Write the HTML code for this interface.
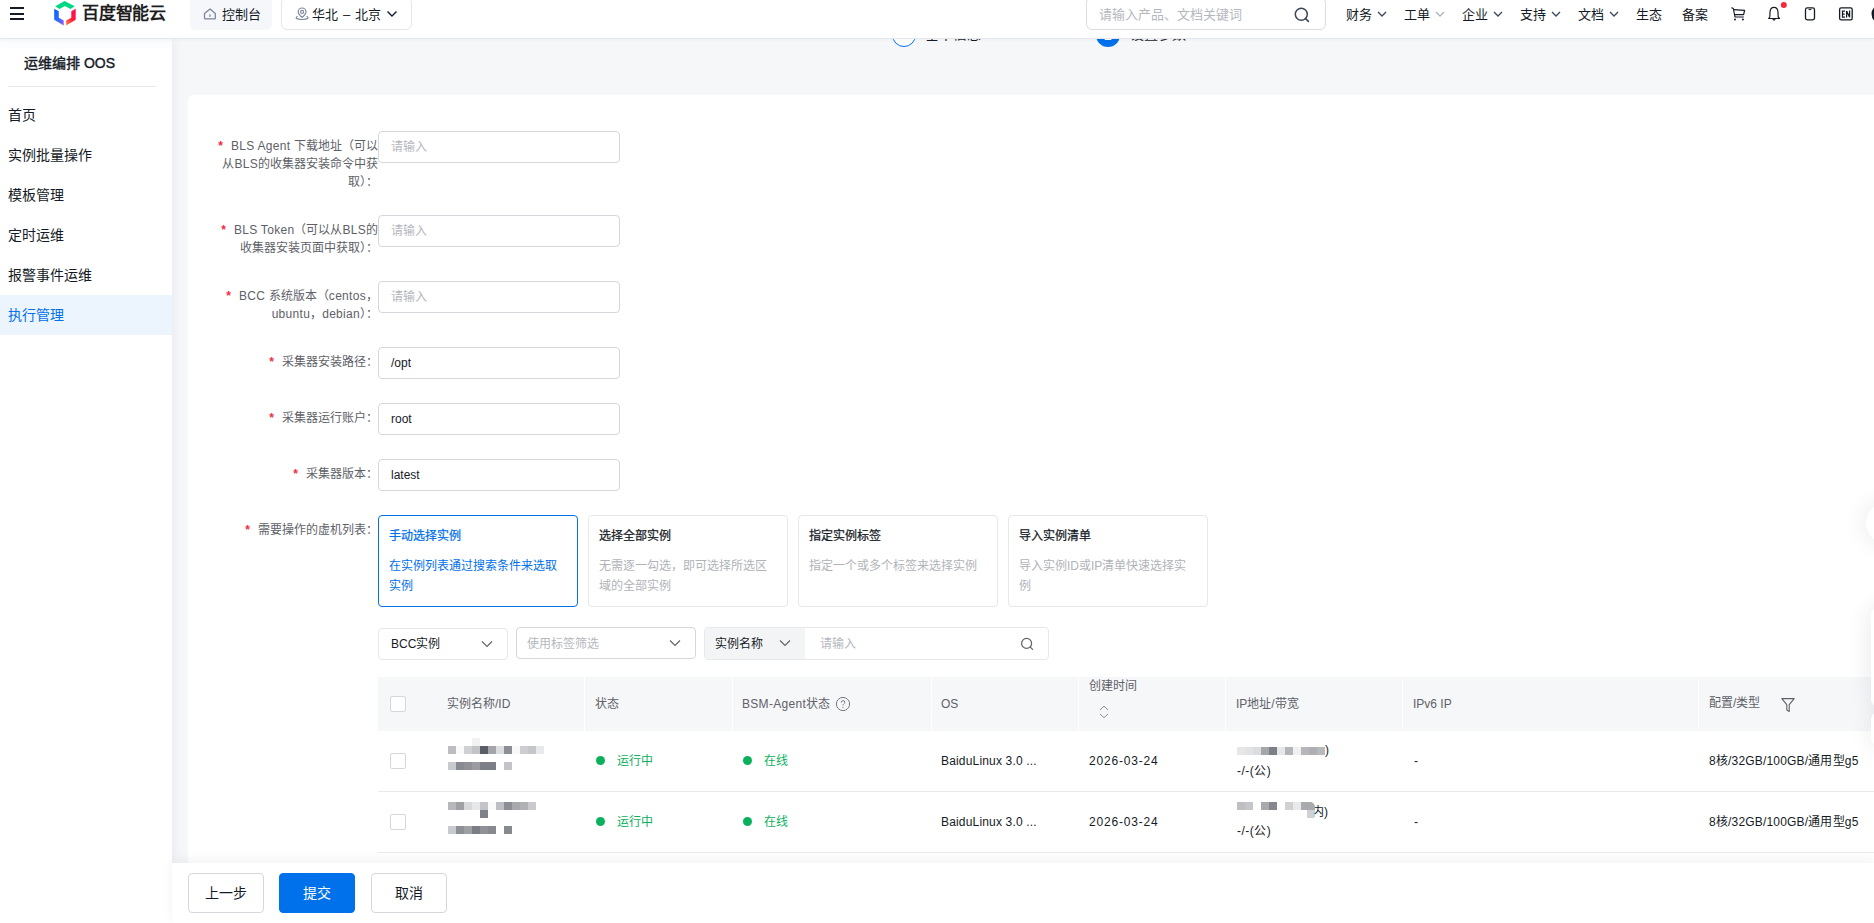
<!DOCTYPE html>
<html lang="zh-CN">
<head>
<meta charset="utf-8">
<title>运维编排 OOS</title>
<style>
*{box-sizing:border-box;margin:0;padding:0}
html,body{width:1874px;height:923px;overflow:hidden}
body{position:relative;background:#f6f7f9;font-family:"Liberation Sans",sans-serif;color:#151b26;font-size:12px}
.a{position:absolute;white-space:nowrap}
/* header */
#hdr{position:absolute;left:0;top:0;width:1874px;height:39px;background:#fff;border-bottom:1px solid #e3e6eb;z-index:10;box-shadow:0 1px 4px rgba(30,40,60,.03)}
.nav{font-size:13px;line-height:18px;top:6px;color:#151b26}
/* sidebar */
#side{position:absolute;left:0;top:39px;width:172px;height:884px;background:#fff;z-index:5;box-shadow:2px 0 10px rgba(30,40,60,.06)}
.mi{position:absolute;left:0;width:172px;height:40px;line-height:40px;padding-left:8px;font-size:14px;color:#151b26}
.mi.on{background:#ecf4fe;color:#0070eb}
/* card */
#card{position:absolute;left:188px;top:95px;width:1700px;height:800px;background:#fff;border-radius:6px}
.lbl{position:absolute;margin-top:1px;right:1496px;font-size:12px;line-height:18px;color:#5e6168;text-align:right;white-space:nowrap}
.star{color:#f5293e;margin-right:8px;font-size:12px;font-weight:700;position:relative;top:0}
.inp{position:absolute;left:378px;width:242px;height:32px;border:1px solid #d4d7dc;border-radius:4px;background:#fff;font-size:12px;line-height:30px;padding-left:12px;color:#151b26}
.ph{color:#b4b7bd}
.ls{letter-spacing:0.3px}
.rc{position:absolute;top:515px;width:200px;height:92px;border:1px solid #e6e8eb;border-radius:4px;background:#fff;padding:10px 0 0 10px}
.rc .t{font-size:12px;line-height:20px;font-weight:400;-webkit-text-stroke:0.25px currentColor;color:#151b26}
.rc .d{font-size:12px;line-height:20px;color:#b0b3b8;margin-top:10px;width:170px;white-space:normal}
.rc.on{border-color:#0070eb}
.rc.on .t,.rc.on .d{color:#0070eb}
/* table */
.th{position:absolute;top:677px;height:54px;background:#f6f7f9}
.tht{position:absolute;font-size:12px;line-height:18px;color:#5e6168;white-space:nowrap}
.td{position:absolute;font-size:12px;line-height:18px;color:#151b26;white-space:nowrap}
.cb{position:absolute;width:16px;height:16px;border:1px solid #d4d7dc;border-radius:2px;background:#fff}
.dot{position:absolute;width:9px;height:9px;border-radius:50%;background:#0ab15d}
.grn{color:#0ab15d}
.px{position:absolute;width:8px;height:8px}
/* footer */
#foot{position:absolute;left:172px;top:863px;width:1702px;height:60px;background:#fff;z-index:6;box-shadow:0 -3px 10px rgba(30,40,60,.06)}
.btn{position:absolute;top:10px;width:76px;height:40px;border:1px solid #d4d7dc;border-radius:4px;background:#fff;font-size:14px;line-height:38px;text-align:center;color:#151b26}
.btn.p{background:#0070eb;border-color:#0070eb;color:#fff}
</style>
</head>
<body>

<!-- steps (partially hidden under header) -->
<div class="a" style="left:892px;top:23px;width:24px;height:24px;border:1.5px solid #0070eb;border-radius:50%;background:#fff;color:#0070eb;font-size:14px;line-height:21px;text-align:center">1</div>
<div class="a" style="left:925px;top:25px;font-size:14px;line-height:18px;color:#151b26">基本信息</div>
<div class="a" style="left:1096px;top:23px;width:24px;height:24px;border-radius:50%;background:#0070eb;color:#fff;font-size:14px;line-height:24px;text-align:center">2</div>
<div class="a" style="left:1130px;top:25px;font-size:14px;line-height:18px;color:#151b26">设置参数</div>

<div id="hdr">
  <!-- hamburger -->
  <div class="a" style="left:10px;top:7px;width:14px;height:2px;background:#151b26"></div>
  <div class="a" style="left:10px;top:12.5px;width:14px;height:2px;background:#151b26"></div>
  <div class="a" style="left:10px;top:18px;width:14px;height:2px;background:#151b26"></div>
  <!-- logo -->
  <svg class="a" style="left:0;top:0" width="80" height="30" viewBox="0 0 80 30">
    <defs>
      <linearGradient id="gb" x1="0" y1="0" x2="1" y2="1"><stop offset="0" stop-color="#0a5cff"/><stop offset=".55" stop-color="#2f6dfb"/><stop offset="1" stop-color="#a457f4"/></linearGradient>
      <linearGradient id="gr" x1="1" y1="0" x2="0" y2="1"><stop offset="0" stop-color="#ff0a5a"/><stop offset=".5" stop-color="#ff1a3c"/><stop offset="1" stop-color="#ff8a4a"/></linearGradient>
    </defs>
    <polygon points="55.2,6.3 64.6,1.1 74.7,6.3 70.5,8.9 65,6 59.4,8.9" fill="#00d884"/>
    <polygon points="54.2,8.8 58.8,11.3 58.8,17.7 63.7,20.6 63.7,25.4 54.2,19.8" fill="url(#gb)"/>
    <polygon points="75.7,8.7 75.7,19.8 66.1,25.6 66.1,20.5 71.3,17.7 71.3,11.2" fill="url(#gr)"/>
  </svg>
  <div class="a" style="left:82px;top:2px;font-size:17px;line-height:24px;font-weight:700;color:#1e1e1e;letter-spacing:-0.2px">百度智能云</div>
  <!-- console btn -->
  <div class="a" style="left:190px;top:-3px;width:82px;height:33px;background:#f5f7fa;border-radius:6px"></div>
  <svg class="a" style="left:200px;top:2px" width="20" height="22" viewBox="200 2 20 22">
    <path d="M204.5,13.4 L210.1,8.9 L215.3,13.4 L215.3,18.2 Q215.3,18.9 214.6,18.9 L205.2,18.9 Q204.5,18.9 204.5,18.2 Z" fill="none" stroke="#7c879a" stroke-width="1.3" stroke-linejoin="round"/>
    <rect x="209.3" y="14.3" width="1.4" height="2.6" fill="#8c96a8"/>
  </svg>
  <div class="a nav" style="left:222px">控制台</div>
  <!-- region -->
  <div class="a" style="left:281px;top:-3px;width:131px;height:33px;border:1px solid #e3e6eb;border-radius:6px;background:#fff"></div>
  <svg class="a" style="left:290px;top:2px" width="24" height="22" viewBox="290 2 24 22">
    <path d="M302.1,17.3 C299.9,15.4 298.2,13.9 298.2,11.9 A3.9,3.9 0 0 1 306,11.9 C306,13.9 304.3,15.4 302.1,17.3 Z" fill="none" stroke="#7c879a" stroke-width="1.2"/>
    <circle cx="302.1" cy="11.9" r="1.5" fill="none" stroke="#7c879a" stroke-width="1.1"/>
    <path d="M297.2,16.6 Q295.6,17.6 296.6,18.6 Q298,19.5 302.1,19.5 Q306.2,19.5 307.6,18.6 Q308.6,17.6 307,16.6" fill="none" stroke="#7c879a" stroke-width="1.2" stroke-linecap="round"/>
  </svg>
  <div class="a nav" style="left:312px">华北<span style="margin:0 5px 0 5px">–</span>北京</div>
  <svg class="a" style="left:386px;top:9px" width="12" height="10" viewBox="0 0 12 10"><path d="M1.5,2.5 L6,7 L10.5,2.5" fill="none" stroke="#151b26" stroke-width="1.4"/></svg>
  <!-- search -->
  <div class="a" style="left:1086px;top:-3px;width:240px;height:33px;border:1px solid #d9dce1;border-radius:6px;background:#fff"></div>
  <div class="a nav" style="left:1099px;color:#b4b7bd">请输入产品、文档关键词</div>
  <svg class="a" style="left:1292px;top:5px" width="20" height="20" viewBox="0 0 20 20"><circle cx="9.3" cy="9.3" r="6" fill="none" stroke="#3d4759" stroke-width="1.5"/><path d="M13.6,13.6 L16.4,16.4" stroke="#3d4759" stroke-width="1.6" stroke-linecap="round"/></svg>
  <!-- nav -->
  <div class="a nav" style="left:1346px">财务</div>
  <svg class="a" style="left:1376px;top:9px" width="12" height="10" viewBox="0 0 12 10"><path d="M2,3 L6,7 L10,3" fill="none" stroke="#3d4759" stroke-width="1.3"/></svg>
  <div class="a nav" style="left:1404px">工单</div>
  <svg class="a" style="left:1434px;top:9px" width="12" height="10" viewBox="0 0 12 10"><path d="M2,3 L6,7 L10,3" fill="none" stroke="#a9b3c4" stroke-width="1.3"/></svg>
  <div class="a nav" style="left:1462px">企业</div>
  <svg class="a" style="left:1492px;top:9px" width="12" height="10" viewBox="0 0 12 10"><path d="M2,3 L6,7 L10,3" fill="none" stroke="#3d4759" stroke-width="1.3"/></svg>
  <div class="a nav" style="left:1520px">支持</div>
  <svg class="a" style="left:1550px;top:9px" width="12" height="10" viewBox="0 0 12 10"><path d="M2,3 L6,7 L10,3" fill="none" stroke="#3d4759" stroke-width="1.3"/></svg>
  <div class="a nav" style="left:1578px">文档</div>
  <svg class="a" style="left:1608px;top:9px" width="12" height="10" viewBox="0 0 12 10"><path d="M2,3 L6,7 L10,3" fill="none" stroke="#3d4759" stroke-width="1.3"/></svg>
  <div class="a nav" style="left:1636px">生态</div>
  <div class="a nav" style="left:1682px">备案</div>
  <!-- icons -->
  <svg class="a" style="left:1725px;top:0" width="149" height="30" viewBox="1725 0 149 30">
    <path d="M1731.5,7.6 L1733.3,8.5 L1735,17 L1743.8,17" fill="none" stroke="#151b26" stroke-width="1.2" stroke-linejoin="round"/>
    <path d="M1733.7,9.6 L1744.6,10.3 L1743.6,14.6 L1735,14.6" fill="none" stroke="#151b26" stroke-width="1.2" stroke-linejoin="round"/>
    <circle cx="1735" cy="19.5" r="1" fill="#151b26"/><circle cx="1742.9" cy="19.5" r="1" fill="#151b26"/>
    <path d="M1768.6,18.5 L1769.8,17 L1770,12 Q1770.4,7.3 1774,7.3 Q1777.6,7.3 1778,12 L1778.2,17 L1779.5,18.5 Z" fill="none" stroke="#151b26" stroke-width="1.2" stroke-linejoin="round"/>
    <path d="M1772.8,19 Q1774,21.2 1775.2,19" fill="none" stroke="#151b26" stroke-width="1.1"/>
    <circle cx="1783.8" cy="4.9" r="3" fill="#f5293e"/>
    <rect x="1805.5" y="7.9" width="9" height="12" rx="1.8" fill="none" stroke="#151b26" stroke-width="1.3"/>
    <path d="M1808.6,9.6 L1811.4,9.6" stroke="#151b26" stroke-width="1"/>
    <rect x="1839.6" y="7.9" width="12.6" height="12" rx="1.6" fill="none" stroke="#151b26" stroke-width="1.3"/>
    <path d="M1845,11.2 L1842.5,11.2 L1842.5,17.2 L1845,17.2 M1842.5,14.2 L1844.7,14.2 M1846.6,17.6 L1846.6,10.9 L1849.6,17.3 L1849.6,10.6" fill="none" stroke="#151b26" stroke-width="1.25"/>
    <circle cx="1881.3" cy="14" r="9.8" fill="#151b26"/>
  </svg>
</div>

<div id="side">
  <div class="a" style="left:0;top:0;width:172px;height:12px;background:linear-gradient(#f9fafc,#fff)"></div>
  <div class="a" style="left:24px;top:15px;font-size:14px;line-height:18px;font-weight:400;-webkit-text-stroke:0.4px #151b26;color:#151b26">运维编排 OOS</div>
  <div class="a" style="left:8px;top:47px;width:148px;height:1px;background:#e6e8eb"></div>
  <div class="mi" style="top:56px">首页</div>
  <div class="mi" style="top:96px">实例批量操作</div>
  <div class="mi" style="top:136px">模板管理</div>
  <div class="mi" style="top:176px">定时运维</div>
  <div class="mi" style="top:216px">报警事件运维</div>
  <div class="mi on" style="top:256px">执行管理</div>
</div>

<div id="card"></div>

<!-- form labels (absolute, page coords) -->
<div class="lbl" style="top:136px"><span class="star">*</span><span class="ls">BLS Agent </span>下载地址（可以<br>从<span class="ls">BLS</span>的收集器安装命令中获<br>取）：</div>
<div class="inp" style="top:131px"><span class="ph">请输入</span></div>

<div class="lbl" style="top:220px"><span class="star">*</span><span class="ls">BLS Token</span>（可以从<span class="ls">BLS</span>的<br>收集器安装页面中获取）：</div>
<div class="inp" style="top:215px"><span class="ph">请输入</span></div>

<div class="lbl" style="top:286px"><span class="star">*</span><span class="ls">BCC </span>系统版本（<span class="ls">centos</span>，<br><span class="ls">ubuntu</span>，<span class="ls">debian</span>）：</div>
<div class="inp" style="top:281px"><span class="ph">请输入</span></div>

<div class="lbl" style="top:352px"><span class="star">*</span>采集器安装路径：</div>
<div class="inp" style="top:347px">/opt</div>

<div class="lbl" style="top:408px"><span class="star">*</span>采集器运行账户：</div>
<div class="inp" style="top:403px">root</div>

<div class="lbl" style="top:464px"><span class="star">*</span>采集器版本：</div>
<div class="inp" style="top:459px">latest</div>

<div class="lbl" style="top:520px"><span class="star">*</span>需要操作的虚机列表：</div>

<div class="rc on" style="left:378px"><div class="t">手动选择实例</div><div class="d">在实例列表通过搜索条件来选取实例</div></div>
<div class="rc" style="left:588px"><div class="t">选择全部实例</div><div class="d">无需逐一勾选，即可选择所选区域的全部实例</div></div>
<div class="rc" style="left:798px"><div class="t">指定实例标签</div><div class="d">指定一个或多个标签来选择实例</div></div>
<div class="rc" style="left:1008px"><div class="t">导入实例清单</div><div class="d">导入实例ID或IP清单快速选择实例</div></div>

<!-- filters -->
<div class="a" style="left:378px;top:628px;width:130px;height:32px;border:1px solid #e6e8eb;border-radius:4px;background:#fff"></div>
<div class="a" style="left:391px;top:635px;font-size:12px;line-height:18px;color:#151b26">BCC实例</div>
<svg class="a" style="left:480px;top:638px" width="14" height="12" viewBox="0 0 14 12"><path d="M2,3.5 L7,8.5 L12,3.5" fill="none" stroke="#5e6168" stroke-width="1.1"/></svg>

<div class="a" style="left:516px;top:627px;width:180px;height:32px;border:1px solid #d4d7dc;border-radius:4px;background:#fff"></div>
<div class="a" style="left:527px;top:635px;font-size:12px;line-height:18px;color:#b4b7bd">使用标签筛选</div>
<svg class="a" style="left:668px;top:637px" width="14" height="12" viewBox="0 0 14 12"><path d="M2,3.5 L7,8.5 L12,3.5" fill="none" stroke="#5e6168" stroke-width="1.1"/></svg>

<div class="a" style="left:704px;top:627px;width:345px;height:33px;border:1px solid #e6e8eb;border-radius:4px;background:#fff;overflow:hidden"><div class="a" style="left:0;top:0;width:100px;height:33px;background:#f3f4f6"></div></div>
<div class="a" style="left:715px;top:635px;font-size:12px;line-height:18px;color:#151b26">实例名称</div>
<svg class="a" style="left:778px;top:637px" width="14" height="12" viewBox="0 0 14 12"><path d="M2,3.5 L7,8.5 L12,3.5" fill="none" stroke="#5e6168" stroke-width="1.1"/></svg>
<div class="a" style="left:820px;top:635px;font-size:12px;line-height:18px;color:#b4b7bd">请输入</div>
<svg class="a" style="left:1019px;top:636px" width="16" height="16" viewBox="0 0 16 16"><circle cx="7.6" cy="7.4" r="5" fill="none" stroke="#5e6168" stroke-width="1.2"/><path d="M11.3,11.1 L13.6,13.4" stroke="#5e6168" stroke-width="1.2" stroke-linecap="round"/></svg>

<!-- table header -->
<div class="th" style="left:378px;width:206px"></div>
<div class="th" style="left:585px;width:147px"></div>
<div class="th" style="left:733px;width:198px"></div>
<div class="th" style="left:932px;width:146px"></div>
<div class="th" style="left:1079px;width:146px"></div>
<div class="th" style="left:1226px;width:176px"></div>
<div class="th" style="left:1403px;width:295px"></div>
<div class="th" style="left:1699px;width:175px"></div>

<div class="cb" style="left:390px;top:696px"></div>
<div class="tht" style="left:447px;top:695px">实例名称/ID</div>
<div class="tht" style="left:595px;top:695px">状态</div>
<div class="tht" style="left:742px;top:695px;letter-spacing:0.3px">BSM-Agent状态</div>
<svg class="a" style="left:835px;top:696px" width="16" height="16" viewBox="0 0 16 16"><circle cx="8" cy="8" r="6.6" fill="none" stroke="#6e727a" stroke-width="0.95"/><path d="M6.2,6.5 Q6.2,4.6 8,4.6 Q9.8,4.6 9.8,6.3 Q9.8,7.2 8.8,7.8 Q8,8.3 8,9.4" fill="none" stroke="#6e727a" stroke-width="0.95"/><circle cx="8" cy="11.3" r=".6" fill="#6e727a"/></svg>
<div class="tht" style="left:941px;top:695px">OS</div>
<div class="tht" style="left:1089px;top:677px">创建时间</div>
<svg class="a" style="left:1097px;top:703px" width="14" height="18" viewBox="0 0 14 18"><path d="M3,6.8 L7,3.1 L11,6.8 M3,11 L7,14.7 L11,11" fill="none" stroke="#7d8189" stroke-width="0.9"/></svg>
<div class="tht" style="left:1236px;top:695px">IP地址/带宽</div>
<div class="tht" style="left:1413px;top:695px">IPv6 IP</div>
<div class="tht" style="left:1709px;top:694px">配置/类型</div>
<svg class="a" style="left:1779px;top:696px" width="18" height="18" viewBox="0 0 18 18"><path d="M2.8,2.6 L15.2,2.6 L10.2,8.6 L10.2,15.4 L7.8,14 L7.8,8.6 Z" fill="none" stroke="#5e6168" stroke-width="1.1" stroke-linejoin="round"/></svg>

<!-- rows -->
<div class="a" style="left:378px;top:791px;width:1496px;height:1px;background:#e8eaed"></div>
<div class="a" style="left:378px;top:852px;width:1496px;height:1px;background:#e8eaed"></div>

<div class="cb" style="left:390px;top:753px"></div>
<div class="cb" style="left:390px;top:814px"></div>

<div class="px" style="left:472px;top:738px;background:#f2f2f2"></div>
<div class="px" style="left:448px;top:746px;background:#bdbec2"></div>
<div class="px" style="left:456px;top:746px;background:#fafafa"></div>
<div class="px" style="left:464px;top:746px;background:#cfd0d2"></div>
<div class="px" style="left:472px;top:746px;background:#c2c3c6"></div>
<div class="px" style="left:480px;top:746px;background:#5a5e66"></div>
<div class="px" style="left:488px;top:746px;background:#a4a5a9"></div>
<div class="px" style="left:496px;top:746px;background:#dcdddf"></div>
<div class="px" style="left:504px;top:746px;background:#8b8e94"></div>
<div class="px" style="left:512px;top:746px;background:#f8f8f8"></div>
<div class="px" style="left:520px;top:746px;background:#cdced1"></div>
<div class="px" style="left:528px;top:746px;background:#c5c6c9"></div>
<div class="px" style="left:536px;top:746px;background:#e8e9ea"></div>
<div class="px" style="left:448px;top:762px;background:#c9cacd"></div>
<div class="px" style="left:456px;top:762px;background:#878a90"></div>
<div class="px" style="left:464px;top:762px;background:#8f9196"></div>
<div class="px" style="left:472px;top:762px;background:#9a9ca0"></div>
<div class="px" style="left:480px;top:762px;background:#7c7f86"></div>
<div class="px" style="left:488px;top:762px;background:#7c7f86"></div>
<div class="px" style="left:504px;top:762px;background:#c4c5c8"></div>
<div class="px" style="left:448px;top:802px;background:#b7b8bc"></div>
<div class="px" style="left:456px;top:802px;background:#a0a1a5"></div>
<div class="px" style="left:464px;top:802px;background:#d8d9db"></div>
<div class="px" style="left:472px;top:802px;background:#e6e7e8"></div>
<div class="px" style="left:480px;top:802px;background:#c3c4c7"></div>
<div class="px" style="left:488px;top:802px;background:#fafafa"></div>
<div class="px" style="left:496px;top:802px;background:#bebfc2"></div>
<div class="px" style="left:504px;top:802px;background:#8c8e93"></div>
<div class="px" style="left:512px;top:802px;background:#a8a9ad"></div>
<div class="px" style="left:520px;top:802px;background:#b0b1b5"></div>
<div class="px" style="left:528px;top:802px;background:#c9cacd"></div>
<div class="px" style="left:480px;top:810px;background:#7f828a"></div>
<div class="px" style="left:448px;top:826px;background:#c9cacd"></div>
<div class="px" style="left:456px;top:826px;background:#8d9095"></div>
<div class="px" style="left:464px;top:826px;background:#9fa0a4"></div>
<div class="px" style="left:472px;top:826px;background:#7a7e84"></div>
<div class="px" style="left:480px;top:826px;background:#8f9196"></div>
<div class="px" style="left:488px;top:826px;background:#868a8f"></div>
<div class="px" style="left:504px;top:826px;background:#868a8f"></div>
<div class="px" style="left:1237px;top:747px;background:#e6e7e8"></div>
<div class="px" style="left:1245px;top:747px;background:#e2e3e4"></div>
<div class="px" style="left:1253px;top:747px;background:#dcdddf"></div>
<div class="px" style="left:1261px;top:747px;background:#a5a6aa"></div>
<div class="px" style="left:1269px;top:747px;background:#7c7f85"></div>
<div class="px" style="left:1277px;top:747px;background:#e6e7e8"></div>
<div class="px" style="left:1285px;top:747px;background:#b4b5b8"></div>
<div class="px" style="left:1293px;top:747px;background:#f0f0f1"></div>
<div class="px" style="left:1301px;top:747px;background:#b5b6b9"></div>
<div class="px" style="left:1309px;top:747px;background:#aeafb2"></div>
<div class="px" style="left:1317px;top:747px;background:#b8b9bc"></div>
<div class="px" style="left:1237px;top:802px;background:#bebfc2"></div>
<div class="px" style="left:1245px;top:802px;background:#c5c6c9"></div>
<div class="px" style="left:1261px;top:802px;background:#a8a9ad"></div>
<div class="px" style="left:1269px;top:802px;background:#85888e"></div>
<div class="px" style="left:1285px;top:802px;background:#d0d1d3"></div>
<div class="px" style="left:1293px;top:802px;background:#e8e9ea"></div>



<div class="dot" style="left:596px;top:756px"></div><div class="td grn" style="left:617px;top:752px">运行中</div>
<div class="dot" style="left:743px;top:756px"></div><div class="td grn" style="left:764px;top:752px">在线</div>
<div class="td" style="left:941px;top:752px;letter-spacing:0.17px">BaiduLinux 3.0 ...</div>
<div class="td" style="left:1089px;top:752px;letter-spacing:0.8px">2026-03-24</div>
<div class="td" style="left:1237px;top:762px;letter-spacing:0.5px">-/-(公)</div>
<div class="td" style="left:1325px;top:741px">)</div>
<div class="td" style="left:1414px;top:752px">-</div>
<div class="td" style="left:1709px;top:752px;letter-spacing:0.18px">8核/32GB/100GB/通用型g5</div>

<div class="dot" style="left:596px;top:817px"></div><div class="td grn" style="left:617px;top:813px">运行中</div>
<div class="dot" style="left:743px;top:817px"></div><div class="td grn" style="left:764px;top:813px">在线</div>
<div class="td" style="left:941px;top:813px;letter-spacing:0.17px">BaiduLinux 3.0 ...</div>
<div class="td" style="left:1089px;top:813px;letter-spacing:0.8px">2026-03-24</div>
<div class="td" style="left:1237px;top:822px;letter-spacing:0.5px">-/-(公)</div>
<div class="td" style="left:1312px;top:803px">内)</div>
<div class="px" style="left:1301px;top:802px;width:14px;background:#a9aaad;border-top-right-radius:5px"></div>
<div class="px" style="left:1307px;top:810px;width:7px;background:#d0d1d3"></div>
<div class="td" style="left:1414px;top:813px">-</div>
<div class="td" style="left:1709px;top:813px;letter-spacing:0.18px">8核/32GB/100GB/通用型g5</div>

<div class="a" style="left:1866px;top:503px;width:40px;height:40px;border-radius:50%;background:#fff;box-shadow:0 0 24px rgba(20,30,50,.10)"></div>
<div class="a" style="left:1871px;top:607px;width:40px;height:100px;border-radius:8px;background:#fff;box-shadow:0 0 24px rgba(20,30,50,.10)"></div>
<div class="a" style="left:1871px;top:712px;width:40px;height:34px;border-radius:8px;background:#fff;box-shadow:0 0 24px rgba(20,30,50,.09)"></div>
<div id="foot">
  <div class="btn" style="left:16px">上一步</div>
  <div class="btn p" style="left:107px">提交</div>
  <div class="btn" style="left:199px">取消</div>
</div>

</body>
</html>
